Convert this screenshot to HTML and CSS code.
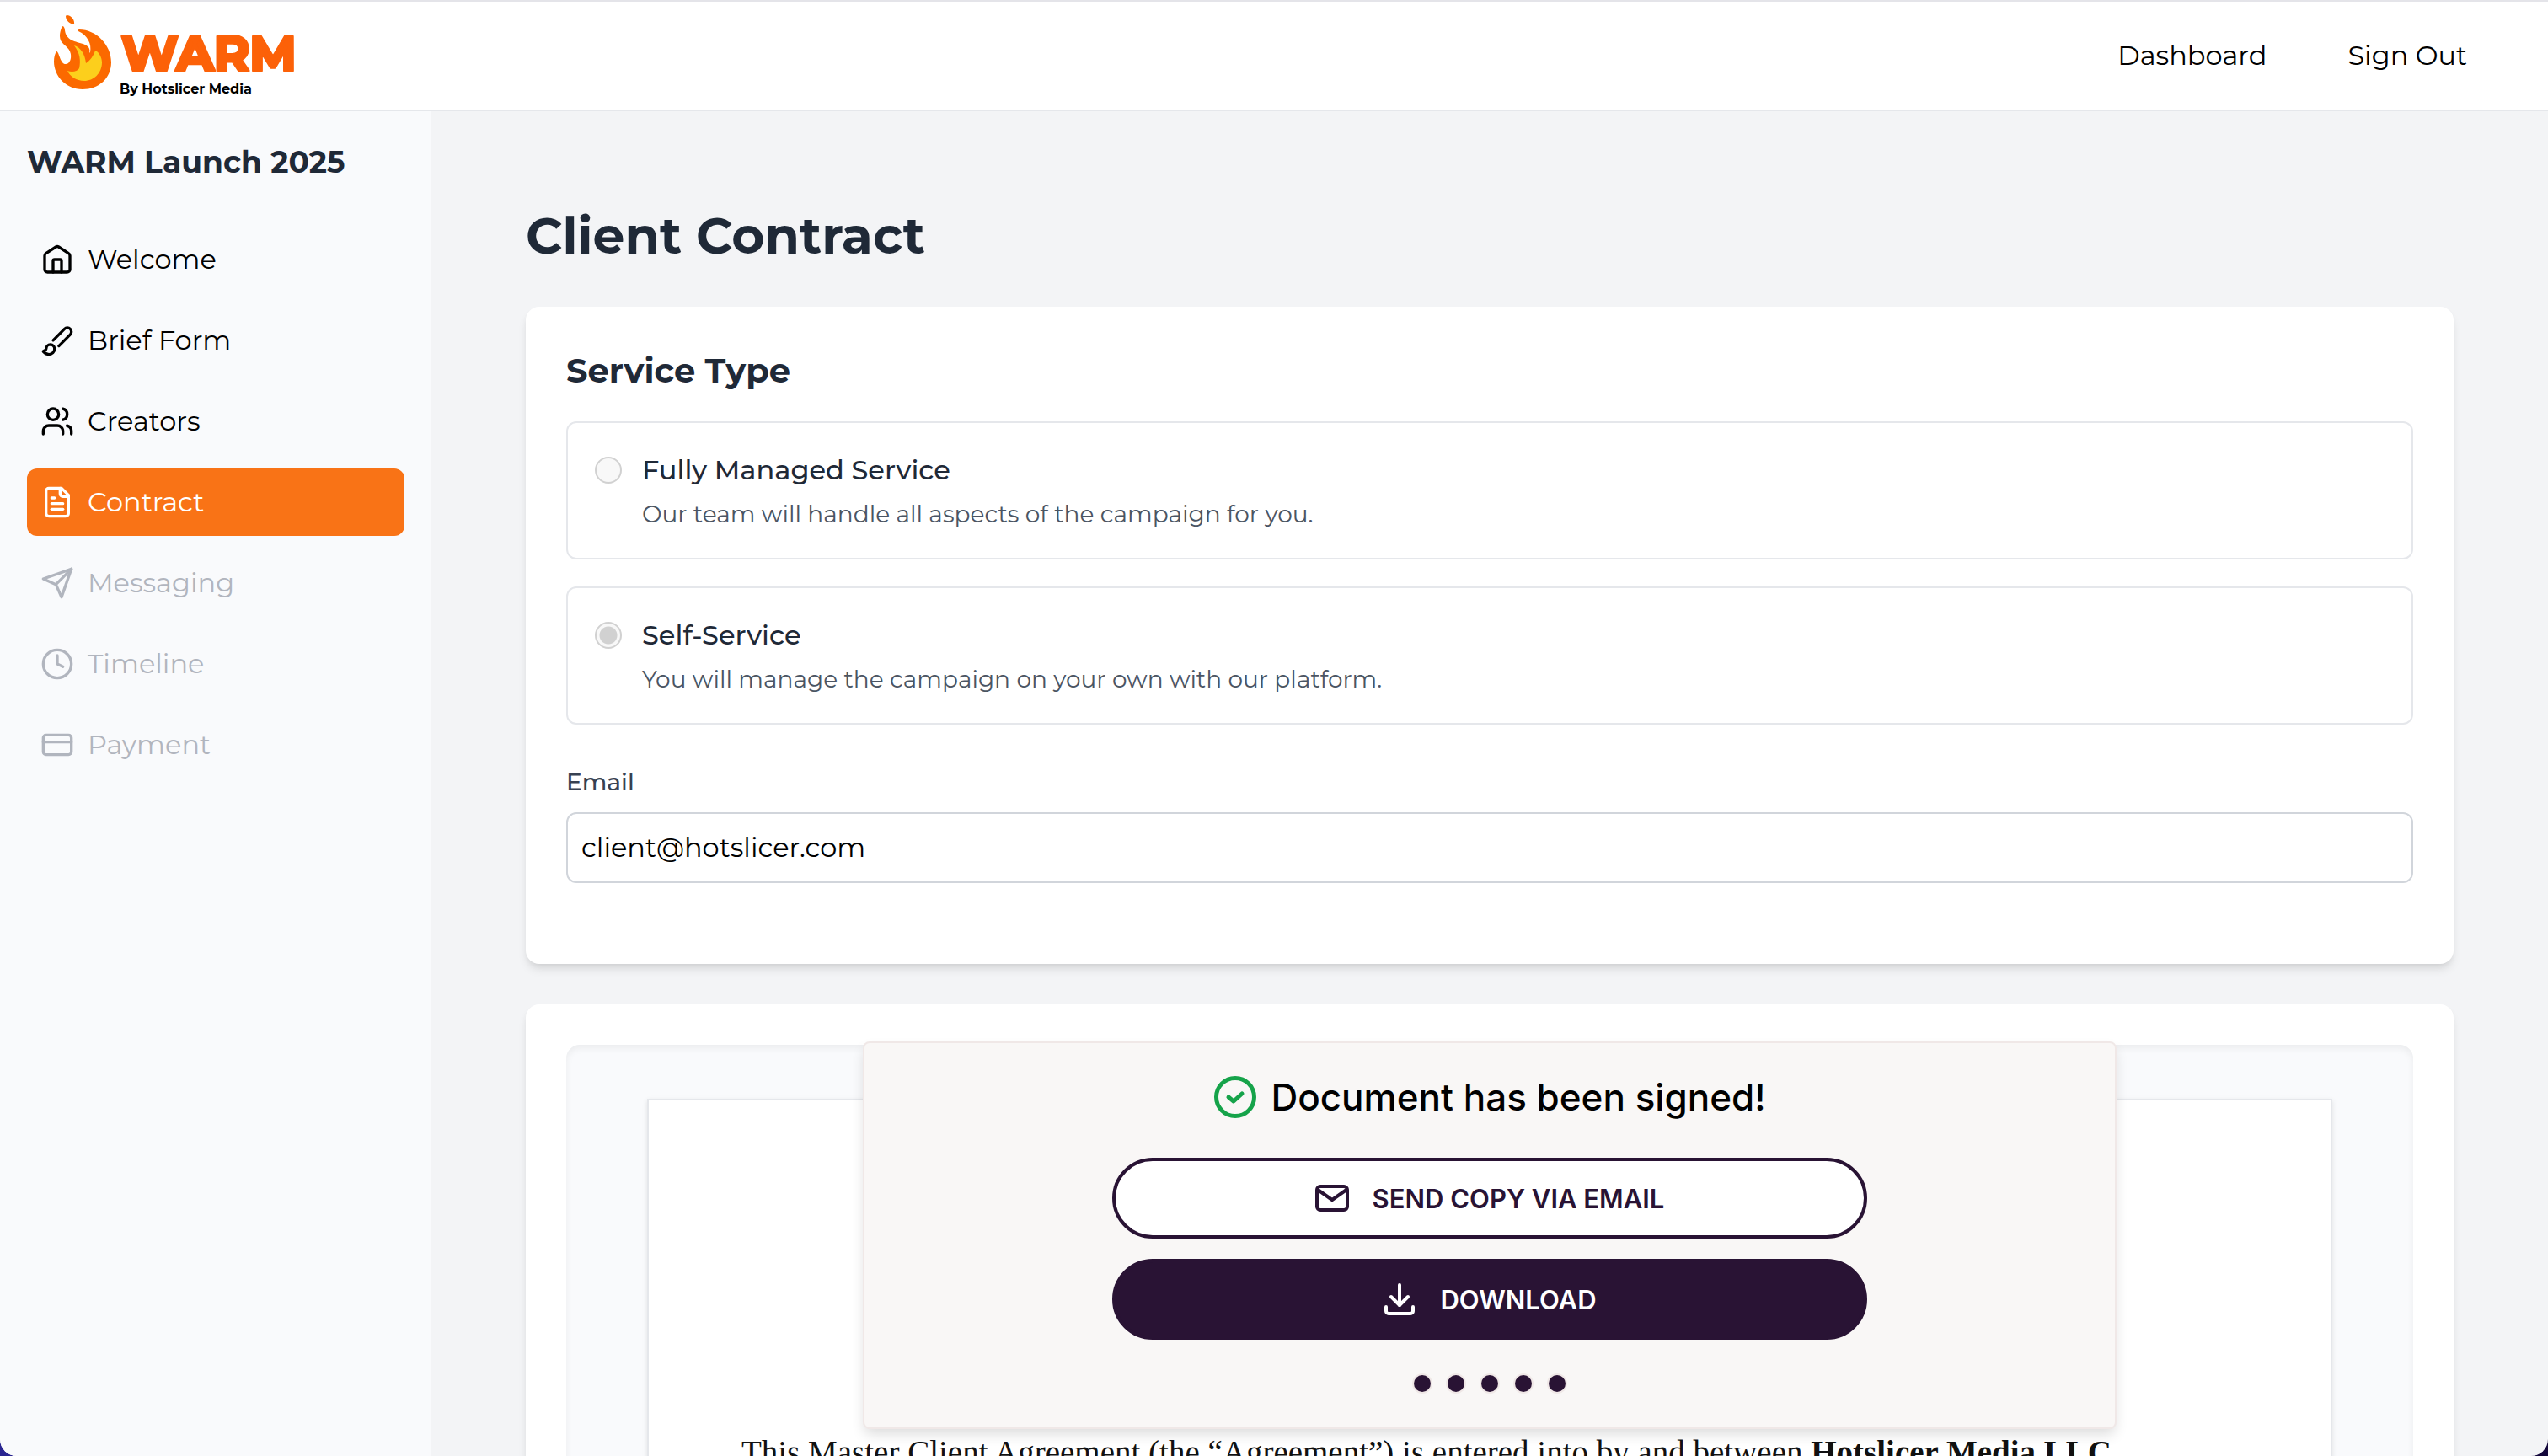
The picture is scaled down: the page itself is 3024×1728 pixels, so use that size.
FILE: index.html
```html
<!DOCTYPE html>
<html lang="en">
<head>
<meta charset="utf-8">
<meta name="viewport" content="width=device-width, initial-scale=1">
<title>Client Contract | WARM</title>
<link rel="stylesheet" href="styles.css">
</head>
<body>
<div class="window">
  <header class="topbar">
    <a class="brand" href="#" aria-label="WARM by Hotslicer Media">
      <svg class="logo" viewBox="40 0 330 128">
        <path fill="#fb6900" d="M79 16c6 0 10 6 9 11-6-1-10-5-10-10zM75 29c3 3 1 6 4 11 6 10 20 7 26 14 3 4 0 8 2 6 2-10-3-20-14-25-1-1-1-2 1-2 20 0 38 18 38 39 0 19-15 32-34 32-20 0-34-16-34-33 0-5 1-9 3-12 3-1 4 15 11 15 5 0 8-8 5-15-3-7-12-9-12-18 0-5 2-12 4-12z"/>
        <path fill="#fccf1c" d="M88 52c8 2 13 11 14 21 5-3 9-9 11-15 4 1 8 8 8 14 0 13-10 22-21 22-9 0-17-5-20-12 5 2 12 1 14-3 2-9 1-18-6-27z"/>
        <text class="logo-word" x="144" y="82">WARM</text>
        <text class="logo-by" x="142" y="109">By Hotslicer Media</text>
      </svg>
    </a>
    <nav class="topnav" aria-label="Account">
      <a href="#">Dashboard</a>
      <a href="#">Sign Out</a>
    </nav>
  </header>

  <div class="layout">
    <aside class="sidebar">
      <h2 class="campaign">WARM Launch 2025</h2>
      <nav class="steps" aria-label="Campaign steps">
        <a class="step" href="#">
          <svg class="icon" viewBox="0 0 24 24"><path d="M3 9.300a2 2 0 0 1 1-1.700l7-4.600a2 2 0 0 1 2 0l7 4.600a2 2 0 0 1 1 1.700V19a2 2 0 0 1-2 2H5a2 2 0 0 1-2-2z"/><path d="M9 21v-8a1 1 0 0 1 1-1h4a1 1 0 0 1 1 1v8"/></svg>
          Welcome
        </a>
        <a class="step" href="#">
          <svg class="icon" viewBox="0 0 24 24"><path d="m9.06 11.9 8.07-8.06a2.85 2.85 0 1 1 4.03 4.03l-8.06 8.08"/><path d="M7.07 14.94c-1.66 0-3 1.35-3 3.02 0 1.33-2.5 1.52-2 2.02 1.08 1.1 2.49 2.02 4 2.02 2.2 0 4-1.8 4-4.04a3.01 3.01 0 0 0-3-3.02z"/></svg>
          Brief Form
        </a>
        <a class="step" href="#">
          <svg class="icon" viewBox="0 0 24 24"><path d="M16 21v-2a4 4 0 0 0-4-4H6a4 4 0 0 0-4 4v2"/><circle cx="9" cy="7" r="4"/><path d="M22 21v-2a4 4 0 0 0-3-3.87"/><path d="M16 3.13a4 4 0 0 1 0 7.75"/></svg>
          Creators
        </a>
        <a class="step step-current" href="#" aria-current="page">
          <svg class="icon" viewBox="0 0 24 24"><path d="M15 2H6a2 2 0 0 0-2 2v16a2 2 0 0 0 2 2h12a2 2 0 0 0 2-2V7z"/><path d="M14 2v4a2 2 0 0 0 2 2h4"/><path d="M10 9H8"/><path d="M16 13H8"/><path d="M16 17H8"/></svg>
          Contract
        </a>
        <a class="step step-locked" href="#" aria-disabled="true">
          <svg class="icon" viewBox="0 0 24 24"><path d="m22 2-7 20-4-9-9-4Z"/><path d="M22 2 11 13"/></svg>
          Messaging
        </a>
        <a class="step step-locked" href="#" aria-disabled="true">
          <svg class="icon" viewBox="0 0 24 24"><circle cx="12" cy="12" r="10"/><path d="M12 6v6l4 2"/></svg>
          Timeline
        </a>
        <a class="step step-locked" href="#" aria-disabled="true">
          <svg class="icon" viewBox="0 0 24 24"><rect x="2" y="5" width="20" height="14" rx="2"/><path d="M2 10h20"/></svg>
          Payment
        </a>
      </nav>
    </aside>

    <main class="content">
      <h1 class="page-title">Client Contract</h1>

      <section class="card service">
        <h2 class="card-title">Service Type</h2>
        <div class="options">
          <label class="option">
            <input class="radio" type="radio" name="service" value="managed" disabled>
            <span class="option-text">
              <span class="option-name">Fully Managed Service</span>
              <span class="option-note">Our team will handle all aspects of the campaign for you.</span>
            </span>
          </label>
          <label class="option">
            <input class="radio" type="radio" name="service" value="self" checked disabled>
            <span class="option-text">
              <span class="option-name">Self-Service</span>
              <span class="option-note">You will manage the campaign on your own with our platform.</span>
            </span>
          </label>
        </div>
        <div class="field">
          <label class="field-label" for="email">Email</label>
          <input class="field-input" id="email" type="email" value="client@hotslicer.com">
        </div>
      </section>

      <section class="card">
        <div class="viewer">
          <article class="sheet">
            <p>This Master Client Agreement (the “Agreement”) is entered into by and between <strong>Hotslicer Media LLC</strong></p>
          </article>
          <div class="signed" role="dialog" aria-labelledby="signed-title">
            <h3 class="signed-title" id="signed-title">
              <svg class="signed-icon" viewBox="0 0 52 52"><circle cx="26" cy="26" r="22.500"/><path d="m18 26 6 5 10-9"/></svg>
              Document has been signed!
            </h3>
            <button class="pill pill-outline" type="button">
              <svg class="pill-icon" viewBox="0 0 40 40"><rect x="2" y="6" width="36" height="28" rx="4"/><path d="m3 10 17 12 17-12"/></svg>
              SEND COPY VIA EMAIL
            </button>
            <button class="pill pill-solid" type="button">
              <svg class="pill-icon" viewBox="0 0 40 40"><path d="M4 29v5a3 3 0 0 0 3 3h26a3 3 0 0 0 3-3v-5"/><path d="m10 17 10 10 10-10"/><path d="M20 3v24"/></svg>
              DOWNLOAD
            </button>
            <div class="dots"><i></i><i></i><i></i><i></i><i></i></div>
          </div>
        </div>
      </section>
    </main>
  </div>
</div>
</body>
</html>
```
FILE: styles.css
```css
* { box-sizing: border-box; }

html { background: linear-gradient(90deg, #2a2591 50%, #12063a 50%); }

body {
  margin: 0;
  font-family: Montserrat, Inter, sans-serif;
  font-size: 32px;
  line-height: 48px;
  color: #000;
}

h1, h2, h3, p { margin: 0; }
a { color: inherit; text-decoration: none; }

.window {
  display: flex;
  flex-direction: column;
  height: 100vh;
  overflow: hidden;
  background: #f3f4f6;
  border-top: 2px solid #e4e4e9;
  border-radius: 0 0 20px 20px;
}

/* Top bar */
.topbar {
  display: flex;
  flex: none;
  align-items: center;
  justify-content: space-between;
  padding: 0 96px 0 40px;
  background: #fff;
  border-bottom: 2px solid #e5e7eb;
}
.brand, .logo { display: block; }
.logo { width: 330px; height: 128px; }
.logo-word {
  font: 700 58px Montserrat, Inter, sans-serif;
  fill: #fc6108;
  stroke: #fc6108;
  stroke-width: 4;
  stroke-linejoin: round;
}
.logo-by { font: 700 16px Montserrat, Inter, sans-serif; fill: #000; }
.topnav { display: flex; gap: 96px; }

/* Sidebar */
.layout { display: flex; flex: 1; min-height: 0; }
.sidebar {
  flex: none;
  width: 512px;
  padding: 32px;
  background: #f9fafc;
}
.campaign {
  margin-bottom: 48px;
  font-size: 36px;
  line-height: 56px;
  color: #1f2937;
}
.steps { display: flex; flex-direction: column; gap: 16px; }
.step {
  display: flex;
  align-items: center;
  gap: 16px;
  padding: 16px;
  border-radius: 12px;
}
.step-current { background: #f97316; color: #fff; }
.step-locked { color: #b1b5be; }
.icon, .pill-icon, .signed-icon {
  flex: none;
  width: 40px;
  height: 40px;
  fill: none;
  stroke: currentColor;
  stroke-width: 2;
  stroke-linecap: round;
  stroke-linejoin: round;
}

/* Main column */
.content { flex: 1; min-width: 0; padding: 112px; }
.page-title {
  margin-bottom: 48px;
  font-size: 60px;
  line-height: 72px;
  color: #1f2937;
}
.card {
  padding: 48px;
  margin-bottom: 48px;
  background: #fff;
  border-radius: 16px;
  box-shadow: 0 8px 12px -2px rgba(0, 0, 0, .1), 0 4px 8px -4px rgba(0, 0, 0, .1);
}
.service { padding-bottom: 96px; }
.card-title {
  margin-bottom: 32px;
  font-size: 40px;
  line-height: 56px;
  color: #1f2937;
}
.options { display: flex; flex-direction: column; gap: 32px; }
.option {
  display: flex;
  gap: 24px;
  padding: 32px;
  border: 2px solid #e5e7eb;
  border-radius: 12px;
}
.radio {
  appearance: none;
  flex: none;
  width: 32px;
  height: 32px;
  margin: 8px 0;
  background: #f8f8f8;
  border: 2px solid #d1d1d1;
  border-radius: 50%;
}
.radio:checked { background: radial-gradient(circle, #d1d1d1 10px, #f8f8f8 11px); }
.option-text { display: flex; flex-direction: column; gap: 8px; }
.option-name { font-weight: 500; color: #1f2937; }
.option-note { font-size: 28px; line-height: 40px; color: #4b5563; }
.field {
  display: flex;
  flex-direction: column;
  gap: 16px;
  margin-top: 48px;
}
.field-label {
  font-size: 28px;
  line-height: 40px;
  font-weight: 500;
  color: #374151;
}
.field-input {
  width: 100%;
  padding: 16px;
  font: inherit;
  color: inherit;
  background: #fff;
  border: 2px solid #d1d5db;
  border-radius: 12px;
}

/* Contract viewer */
.viewer {
  position: relative;
  padding: 64px 96px;
  background: #f9fafc;
  border-radius: 16px;
  box-shadow: inset 0 4px 8px rgba(0, 0, 0, .06);
}
.sheet {
  padding: 394px 110px 112px;
  font-family: Georgia, "Liberation Serif", serif;
  font-size: 39px;
  line-height: 48px;
  color: #111;
  background: #fff;
  border: 2px solid #e5e7eb;
  box-shadow: 0 2px 6px rgba(0, 0, 0, .1);
}
.signed {
  position: absolute;
  top: -4px;
  left: 50%;
  display: flex;
  flex-direction: column;
  align-items: center;
  gap: 24px;
  width: 1488px;
  height: 460px;
  padding: 38px 64px;
  font-family: Inter, sans-serif;
  background: #f9f7f6;
  border: 2px solid #f0e8e7;
  border-radius: 8px;
  box-shadow: 0 8px 16px -2px rgba(0, 0, 0, .14);
  transform: translateX(-50%);
}
.signed-title {
  display: flex;
  align-items: center;
  gap: 16px;
  margin-bottom: 22px;
  font-size: 44px;
  line-height: 52px;
  font-weight: 500;
}
.signed-icon {
  width: 52px;
  height: 52px;
  stroke: #16a34a;
  stroke-width: 5;
}
.pill {
  display: flex;
  align-items: center;
  justify-content: center;
  gap: 28px;
  width: 896px;
  height: 96px;
  font: 600 31px Inter, sans-serif;
  border: 4px solid #291334;
  border-radius: 48px;
}
.pill-icon { stroke-width: 4; }
.pill-outline { color: #291334; background: #fff; }
.pill-solid { color: #fff; background: #291334; }
.dots { display: flex; gap: 20px; padding-top: 18px; }
.dots i {
  width: 20px;
  height: 20px;
  background: #291334;
  border-radius: 50%;
  box-shadow: 0 0 0 2px #f0e8e7;
}
```
